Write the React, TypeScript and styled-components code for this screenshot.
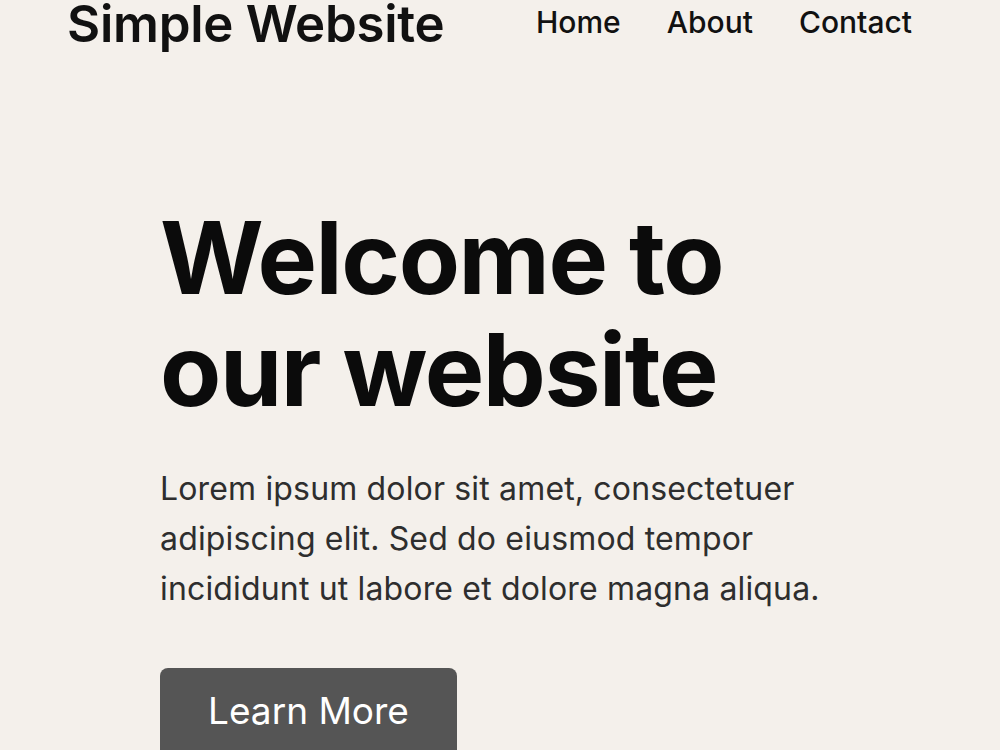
import * as React from 'react';
import styled, { createGlobalStyle } from 'styled-components';

const GlobalStyle = createGlobalStyle`
  html, body {
    margin: 0;
    padding: 0;
    background: #f4f0eb;
    font-family: Inter, "Noto Sans", "Liberation Sans", sans-serif;
    color: #111111;
  }
  * {
    box-sizing: border-box;
  }
`;

const links = ['Home', 'About', 'Contact'];

const App = () => {
  return (
    <>
      <GlobalStyle />
      <Page>
        <Header>
          <Logo>Simple Website</Logo>
          <Nav>
            {links.map(link => (
              <NavLink key={link} href="#">{link}</NavLink>
            ))}
          </Nav>
        </Header>
        <Hero>
          <Title>
            Welcome to
            <br />
            our website
          </Title>
          <Lead>
            Lorem ipsum dolor sit amet, consectetuer
            <br />
            adipiscing elit. Sed do eiusmod tempor
            <br />
            incididunt ut labore et dolore magna aliqua.
          </Lead>
          <Button>Learn More</Button>
        </Hero>
      </Page>
    </>
  );
};

export default App;

const Page = styled.div`
  width: 1000px;
  height: 750px;
  overflow: hidden;
`;

const Header = styled.header`
  display: flex;
  align-items: flex-start;
  justify-content: space-between;
  padding: 0 88px 0 67px;
`;

const Logo = styled.div`
  font-size: 51px;
  line-height: 48px;
  font-weight: 600;
  letter-spacing: -0.005em;
`;

const Nav = styled.nav`
  display: flex;
  gap: 46px;
  padding-top: 7px;
`;

const NavLink = styled.a`
  font-size: 30px;
  line-height: 30px;
  font-weight: 500;
  color: #111111;
  text-decoration: none;
`;

const Hero = styled.section`
  display: flex;
  flex-direction: column;
  align-items: flex-start;
  padding: 154px 0 0 160px;
`;

const Title = styled.h1`
  margin: 0;
  font-size: 100px;
  line-height: 112px;
  font-weight: 700;
  letter-spacing: -0.014em;
  color: #0b0b0b;
`;

const Lead = styled.p`
  margin: 38px 0 0;
  font-size: 32px;
  line-height: 50px;
  font-weight: 400;
  letter-spacing: 0.005em;
  color: #2e2e2e;
`;

const Button = styled.button`
  margin-top: 54px;
  padding: 20px 48px 24px;
  border: none;
  border-radius: 8px;
  background: #555555;
  color: #ffffff;
  font-family: Inter, "Noto Sans", "Liberation Sans", sans-serif;
  font-size: 37px;
  line-height: 46px;
  font-weight: 400;
  cursor: pointer;
`;
